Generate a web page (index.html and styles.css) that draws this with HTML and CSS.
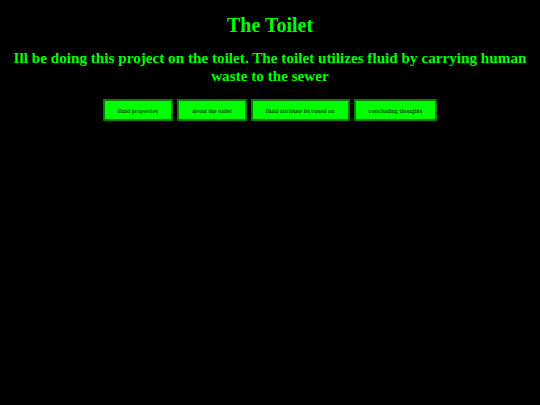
FILE: index.html
```html
<!DOCTYPE html>
<html>
<head>
<meta charset="utf-8">
<title>The Toilet</title>
<link rel="stylesheet" href="styles.css">
</head>
<body>
<h1 class="title">The Toilet</h1>
<h2 class="intro">Ill be doing this project on the toilet. The toilet utilizes fluid by carrying human waste to the sewer</h2>
<nav class="menu">
  <button class="tab">fluid properties</button>
  <button class="tab">about the toilet</button>
  <button class="tab">fluid attribute its based on</button>
  <button class="tab">concluding thoughts</button>
</nav>
</body>
</html>
```
FILE: styles.css
```css
html, body {
  background: #000;
}
body {
  margin: 8px;
  font-family: "Liberation Serif", "Times New Roman", serif;
  color: #00ff00;
}
.title {
  font-size: 20px;
  text-align: center;
  margin: 6px 0 0;
  line-height: 23px;
}
.intro {
  font-size: 15.2px;
  text-align: center;
  margin: 12px 0 0;
  line-height: 18px;
}
.menu {
  display: flex;
  justify-content: center;
  gap: 4px;
  margin-top: 14px;
}
.tab {
  font-family: "Liberation Serif", "Times New Roman", serif;
  font-size: 6.6px;
  color: #000;
  background: #00ff00;
  border: 2px solid #0b7a0b;
  height: 22px;
  padding: 0 13px;
}
```
